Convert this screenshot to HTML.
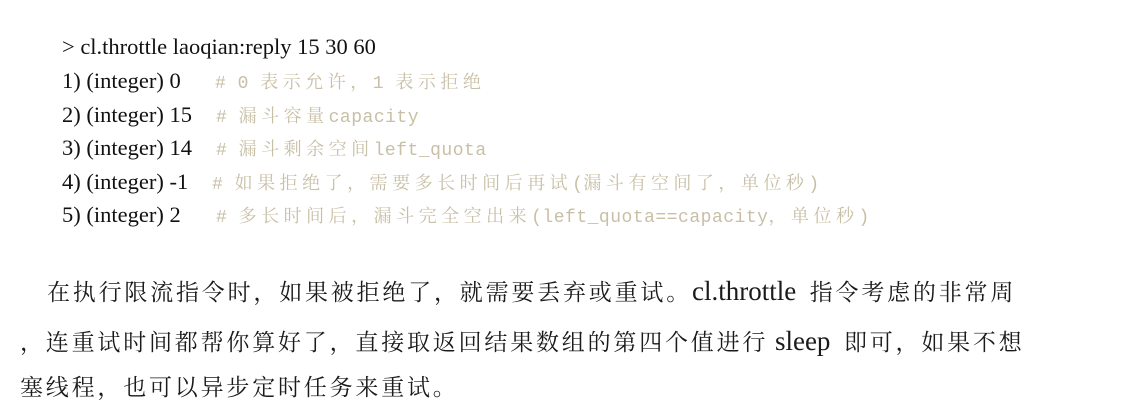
<!DOCTYPE html>
<html><head><meta charset="utf-8"><style>
body{margin:0;background:#fff;width:1128px;height:413px;position:relative;overflow:hidden}
.l{position:absolute;white-space:pre;line-height:1}
.code{font-family:"Liberation Serif","Noto Serif CJK SC",serif;font-size:22.5px;color:#111}
.cm{font-family:"Liberation Mono","Noto Serif CJK SC",monospace;font-size:18px;color:#c8bfa6;letter-spacing:0.5px}
.cm .c{font-family:"Noto Serif CJK SC",serif;letter-spacing:4.5px}
.p{font-family:"Liberation Serif","Noto Serif CJK SC",serif;font-size:23px;color:#1a1a1a}
.p .c{font-family:"Noto Serif CJK SC",serif;letter-spacing:2.8px}
.p .e{font-family:"Liberation Serif",serif;letter-spacing:0;font-size:27px}
</style></head><body>
<div class="l code" style="left:62px;top:36px">&gt; cl.throttle laoqian:reply 15 30 60</div>
<div class="l code" style="left:62px;top:70px">1) (integer) 0</div>
<div class="l code" style="left:62px;top:104px">2) (integer) 15</div>
<div class="l code" style="left:62px;top:137px">3) (integer) 14</div>
<div class="l code" style="left:62px;top:171px">4) (integer) -1</div>
<div class="l code" style="left:62px;top:204px">5) (integer) 2</div>

<div class="l cm" style="left:215px;top:72px"># 0 <span class="c">表示允许，</span>1 <span class="c">表示拒绝</span></div>
<div class="l cm" style="left:216px;top:106px"># <span class="c">漏斗容量</span>capacity</div>
<div class="l cm" style="left:216px;top:139px"># <span class="c">漏斗剩余空间</span>left_quota</div>
<div class="l cm" style="left:212px;top:173px"># <span class="c">如果拒绝了，需要多长时间后再试</span>(<span class="c">漏斗有空间了，单位秒</span>)</div>
<div class="l cm" style="left:216px;top:206px"># <span class="c">多长时间后，漏斗完全空出来</span>(left_quota==capacity<span class="c">，单位秒</span>)</div>

<div class="l p" style="left:47px;top:278px"><span class="c">在执行限流指令时，如果被拒绝了，就需要丢弃或重试。</span><span class="e">cl.throttle  </span><span class="c">指令考虑的非常周</span></div>
<div class="l p" style="left:20px;top:328px"><span class="c">，连重试时间都帮你算好了，直接取返回结果数组的第四个值进行</span><span class="e"> sleep  </span><span class="c">即可，如果不想</span></div>
<div class="l p" style="left:20px;top:374px"><span class="c">塞线程，也可以异步定时任务来重试。</span></div>
</body></html>
